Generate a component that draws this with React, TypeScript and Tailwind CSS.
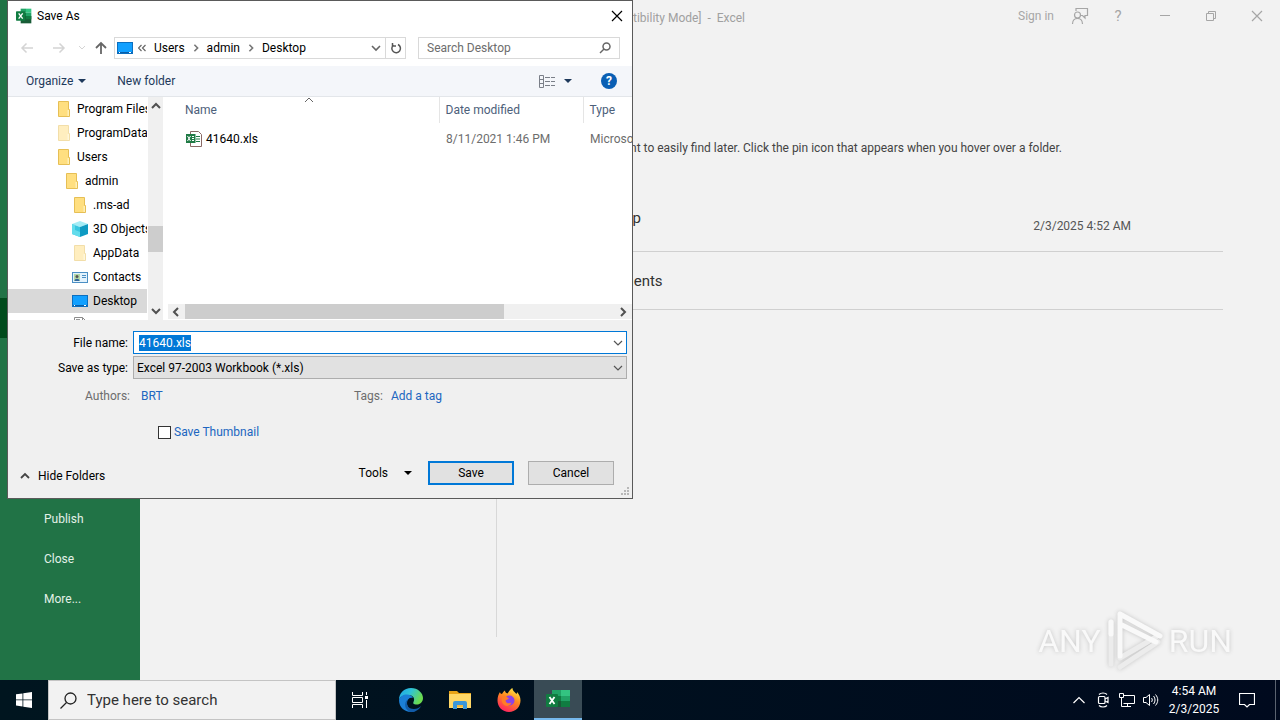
import { useEffect, useRef } from "react";
import type { ReactNode } from "react";

type Dir = "up" | "down" | "left" | "right";

const chevronPaths: Record<Dir, string> = {
  up: "M1 7 L5 3 L9 7",
  down: "M1 3 L5 7 L9 3",
  left: "M7 1 L3 5 L7 9",
  right: "M3 1 L7 5 L3 9",
};

function Chevron({ dir, className = "size-2.5", weight = 1.6 }: { dir: Dir; className?: string; weight?: number }) {
  return (
    <svg viewBox="0 0 10 10" className={`shrink-0 ${className}`} fill="none" stroke="currentColor" strokeWidth={weight}>
      <path d={chevronPaths[dir]} />
    </svg>
  );
}

function Caret() {
  return (
    <svg viewBox="0 0 8 4" className="h-1 w-2 shrink-0" fill="currentColor">
      <path d="M0 0H8L4 4Z" />
    </svg>
  );
}

function ExcelIcon({ className }: { className: string }) {
  return (
    <svg viewBox="0 0 24 24" className={className}>
      <path d="M7 1h8v6H7z" fill="#21a366" />
      <path d="M15 1h8v6h-8z" fill="#33c481" />
      <path d="M7 7h8v5H7z" fill="#107c41" />
      <path d="M15 7h8v5h-8z" fill="#21a366" />
      <path d="M7 12h16v11H7z" fill="#185c37" />
      <path d="M15 12h8v5h-8z" fill="#107c41" />
      <rect x="0" y="5" width="14" height="14" rx="1" fill="#107c41" />
      <path d="M4 8l6 8M10 8l-6 8" stroke="#fff" strokeWidth="2" />
    </svg>
  );
}

function FolderIcon({ faded = false }: { faded?: boolean }) {
  return (
    <svg viewBox="0 0 16 16" className={faded ? "size-4 shrink-0 opacity-50" : "size-4 shrink-0"}>
      <path d="M2.500 0.500h10v8h1v7h-11z" fill="#ffdf80" stroke="#e6bf55" />
      <path d="M11.500 15V9h1.500v6z" fill="#fff0b8" />
    </svg>
  );
}

function DesktopIcon() {
  return (
    <svg viewBox="0 0 16 16" className="size-4 shrink-0">
      <rect x="0.500" y="2.500" width="15" height="11" fill="#12a0ff" stroke="#0b6fc0" />
      <path d="M1 12.500h14" stroke="#0a5ea8" />
      <path d="M2 12.500h1M12 12.500h2" stroke="#fff" />
    </svg>
  );
}

function CubeIcon() {
  return (
    <svg viewBox="0 0 16 16" className="size-4 shrink-0">
      <path d="M0 3l8-3 8 3-8 3z" fill="#a5ecf5" />
      <path d="M0 3l8 3v10l-8-3z" fill="#38c6e0" />
      <path d="M16 3L8 6v10l8-3z" fill="#0e9ac2" />
      <path d="M0 3l3 1v5l5 2v5l-8-3z" fill="#63dcec" />
    </svg>
  );
}

function ContactIcon() {
  return (
    <svg viewBox="0 0 16 16" className="size-4 shrink-0">
      <rect x="0.500" y="3.500" width="15" height="10" fill="#e3f2fc" stroke="#4b8fc4" />
      <rect x="2" y="5" width="6" height="7" fill="#b3d8a8" />
      <circle cx="5" cy="7.500" r="1.500" fill="#555" />
      <path d="M2.500 12c0-3 5-3 5 0z" fill="#31659c" />
      <path d="M10 6.500h4M10 8.500h4" stroke="#4b8fc4" />
    </svg>
  );
}

function PageIcon() {
  return (
    <svg viewBox="0 0 16 16" className="size-4 shrink-0">
      <path d="M2.500 0.500h8l3 3v12h-11zM10.500 0.500v3h3" fill="#fff" stroke="#8c8c8c" />
      <path d="M4 2.500h4" stroke="#999" />
    </svg>
  );
}

function XlsIcon() {
  return (
    <svg viewBox="0 0 16 16" className="size-4 shrink-0">
      <path d="M4.500 0.500h8l3 3v12h-11z" fill="#fff" stroke="#8a6a66" />
      <path d="M10 5.500h4M10 8h4M10 10.500h4" stroke="#1f7a45" />
      <path d="M0 3h9.500v9H0z" fill="#1f7a45" />
      <path d="M1.500 5l3 5M4.500 5l-3 5M6 5.500h2M6 7.500h2M6 9.500h2" stroke="#fff" />
    </svg>
  );
}

const menuItems = ["Publish", "Close", "More..."];

function BackstageMenu() {
  return (
    <nav className="w-[140px] shrink-0 bg-[#217346] pt-[298px] text-[12px] text-[#e3f1e8]">
      <button aria-label="Save As" className="mb-[161px] block h-10 w-full bg-[#004b1c]" />
      {menuItems.map((item) => (
        <button key={item} className="flex h-10 w-full items-center pl-11 text-left">
          {item}
        </button>
      ))}
    </nav>
  );
}

function WindowButtons() {
  return (
    <div className="flex items-center text-[#a6a6a6]">
      <button className="text-[12px]">Sign in</button>
      <button aria-label="Feedback" className="ml-3.5 flex w-6 justify-center">
        <svg viewBox="0 0 18 18" className="size-[18px]" fill="none" stroke="currentColor" strokeWidth="1.200">
          <path d="M5 4V1.500h11.500v7H14v2.500l-2.500-2.500H10" />
          <circle cx="6.500" cy="8" r="3" />
          <path d="M1.500 17c0-7.500 10-7.500 10 0" />
        </svg>
      </button>
      <button aria-label="Help" className="ml-3.5 w-6 text-[15px]">?</button>
      <button aria-label="Minimize" className="flex w-[46px] justify-center pl-6">
        <svg viewBox="0 0 12 12" className="size-3" stroke="currentColor"><path d="M1 5.500h10" /></svg>
      </button>
      <button aria-label="Restore" className="flex w-[46px] justify-center pl-6">
        <svg viewBox="0 0 12 12" className="size-3" fill="none" stroke="currentColor">
          <path d="M1.500 3.500h7v7h-7zM3.500 3.500v-2h7v7h-2" />
        </svg>
      </button>
      <button aria-label="Close" className="flex w-[46px] justify-center pl-6">
        <svg viewBox="0 0 12 12" className="size-3" stroke="currentColor" strokeWidth="1.200"><path d="M1 1l10 10M11 1L1 11" /></svg>
      </button>
    </div>
  );
}

function FolderEntry({ name, date }: { name: string; date?: string }) {
  return (
    <li className="flex items-center justify-between border-b border-[#d0d0d0] pr-[92px] pl-[89px] text-[#333]">
      <span className="pt-0.5 text-[15px]">{name}</span>
      {date && <span className="pt-4 text-[12px] text-[#555]">{date}</span>}
    </li>
  );
}

function Backstage() {
  return (
    <div className="flex flex-1 bg-[#f2f2f2]">
      <BackstageMenu />
      <div className="flex min-w-0 flex-1 flex-col">
        <header className="flex h-8 items-center justify-between pr-3">
          <div className="w-[605px] pt-1 text-right text-[12px] whitespace-pre text-[#a0a0a0]">
            [Compatibility Mode]  -  Excel
          </div>
          <WindowButtons />
        </header>
        <div className="mb-[43px] flex flex-1">
          <div className="w-[357px] shrink-0 border-r border-[#d8d8d8]" />
          <div className="flex-1 pr-[57px]">
            <p className="w-[565px] pt-[106px] text-right text-[12px] leading-5 whitespace-nowrap text-[#444]">
              nt to easily find later. Click the pin icon that appears when you hover over a folder.
            </p>
            <ul className="pt-[26px] *:h-[58px] *:first:h-[68px]">
              <FolderEntry name="Desktop" date="2/3/2025 4:52 AM" />
              <FolderEntry name="Documents" />
            </ul>
          </div>
        </div>
      </div>
    </div>
  );
}

function AddressBar() {
  return (
    <div className="flex h-[34px] items-center pr-3 pl-3 text-[12px]">
      <div className="flex w-[94px] items-center justify-between pr-[7px] text-[#d4d4d4]">
        <button aria-label="Back">
          <svg viewBox="0 0 14 12" className="h-3 w-3.5" fill="none" stroke="currentColor" strokeWidth="1.500"><path d="M13 6H2M6.500 1.500L2 6l4.500 4.500" /></svg>
        </button>
        <button aria-label="Forward" className="ml-2">
          <svg viewBox="0 0 14 12" className="h-3 w-3.5" fill="none" stroke="currentColor" strokeWidth="1.500"><path d="M1 6h11M7.500 1.500L12 6l-4.500 4.500" /></svg>
        </button>
        <button aria-label="Recent locations" className="ml-1">
          <svg viewBox="0 0 6 4" className="h-1 w-1.5" fill="none" stroke="currentColor"><path d="M0 0l3 3 3-3" /></svg>
        </button>
        <button aria-label="Up" className="text-[#666]">
          <svg viewBox="0 0 12 14" className="h-3.5 w-3" fill="none" stroke="currentColor" strokeWidth="1.800"><path d="M6 13V2M1 7l5-5 5 5" /></svg>
        </button>
      </div>
      <div className="flex h-[22px] flex-1 items-center border border-[#d9d9d9] pl-0.5 text-black">
        <DesktopIcon />
        <svg viewBox="0 0 8 8" className="mr-2 ml-[5px] size-2 shrink-0" fill="none" stroke="#666" strokeWidth="1.200">
          <path d="M3.500 1l-3 3 3 3M7.500 1l-3 3 3 3" />
        </svg>
        <button>Users</button>
        <Chevron dir="right" weight={2} className="mx-[7px] size-2 text-[#777]" />
        <button>admin</button>
        <Chevron dir="right" weight={2} className="mx-[7px] size-2 text-[#777]" />
        <button>Desktop</button>
        <button aria-label="Previous locations" className="mr-1 ml-auto text-[#666]">
          <Chevron dir="down" />
        </button>
        <button aria-label="Refresh" className="flex h-full w-5 items-center justify-center border-l border-[#d9d9d9] text-[#555]">
          <svg viewBox="0 0 12 12" className="size-3" fill="none" stroke="currentColor" strokeWidth="1.500">
            <path d="M8 2.500A4.300 4.300 0 1 1 3.500 3M2.500 1v3h3.500" />
          </svg>
        </button>
      </div>
      <label className="ml-3 flex h-[22px] w-[202px] items-center border border-[#d9d9d9] pr-2 pl-2">
        <input
          aria-label="Search Desktop"
          placeholder="Search Desktop"
          className="min-w-0 flex-1 outline-none placeholder:text-[#6d6d6d]"
        />
        <svg viewBox="0 0 12 12" className="size-3 text-[#666]" fill="none" stroke="currentColor" strokeWidth="1.500">
          <circle cx="7.500" cy="4.500" r="3.500" />
          <path d="M5 7L1 11" />
        </svg>
      </label>
    </div>
  );
}

function CommandBar() {
  return (
    <div className="flex h-[31px] items-center border-b border-[#e3e6ea] bg-[#f4f6fa] pr-[15px] pl-[18px] text-[12px] text-[#1e395b]">
      <button className="flex items-center gap-[5px]">
        Organize <Caret />
      </button>
      <button className="ml-[31px]">New folder</button>
      <button aria-label="Change your view" className="ml-auto flex items-center gap-2">
        <svg viewBox="0 0 17 13" className="h-[13px] w-[17px]" fill="none" stroke="#7a7f88">
          <path d="M0.500 0.500h4v12h-4zM0.500 4.500h4M0.500 8.500h4M6 2.500h5M12 2.500h4M6 6.500h5M12 6.500h4M6 10.500h5M12 10.500h4" />
        </svg>
        <Caret />
      </button>
      <button aria-label="Help" className="ml-[29px] size-4 rounded-full bg-[#0a5fb4] text-[12px] leading-4 font-bold text-white">
        ?
      </button>
    </div>
  );
}

type TreeItem = { name: string; icon: ReactNode; indent: string };

const tree: TreeItem[] = [
  { name: "Program Files", icon: <FolderIcon />, indent: "pl-12" },
  { name: "ProgramData", icon: <FolderIcon faded />, indent: "pl-12" },
  { name: "Users", icon: <FolderIcon />, indent: "pl-12" },
  { name: "admin", icon: <FolderIcon />, indent: "pl-14" },
  { name: ".ms-ad", icon: <FolderIcon />, indent: "pl-16" },
  { name: "3D Objects", icon: <CubeIcon />, indent: "pl-16" },
  { name: "AppData", icon: <FolderIcon faded />, indent: "pl-16" },
  { name: "Contacts", icon: <ContactIcon />, indent: "pl-16" },
  { name: "Desktop", icon: <DesktopIcon />, indent: "pl-16" },
  { name: "", icon: <PageIcon />, indent: "pl-16" },
];

function FolderTree() {
  return (
    <div className="flex h-[223px] shrink-0">
      <ul className="w-[139px] overflow-hidden text-[12px] text-black">
        {tree.map((item, i) => (
          <li
            key={i}
            className={`flex h-6 items-center gap-[5px] whitespace-nowrap ${item.indent} ${item.name === "Desktop" ? "bg-[#d9d9d9]" : ""}`}
          >
            {item.icon}
            {item.name}
          </li>
        ))}
      </ul>
      <div className="ml-px flex w-[15px] flex-col items-center bg-[#f0f0f0] py-1 text-[#505050]">
        <Chevron dir="up" weight={2} />
        <div className="mt-[115px] h-[26px] w-full bg-[#cdcdcd]" />
        <Chevron dir="down" weight={2} className="mt-auto size-2.5" />
      </div>
    </div>
  );
}

function FileList() {
  return (
    <div className="ml-[5px] flex min-w-0 flex-1 flex-col overflow-hidden">
      <table className="w-full table-fixed text-left text-[12px] whitespace-nowrap text-[#6d6d6d]">
        <thead>
          <tr className="h-[26px] text-[#4c607a] *:font-normal">
            <th className="relative w-[271px] border-r border-[#e5e5e5] pl-[17px]">
              Name
              <Chevron dir="up" weight={1} className="absolute -top-0.5 left-[136px] size-2.5 text-[#666]" />
            </th>
            <th className="w-36 border-r border-[#e5e5e5] pl-1.5">Date modified</th>
            <th className="pl-1.5">Type</th>
          </tr>
        </thead>
        <tbody>
          <tr className="h-8">
            <td className="pl-[18px]">
              <span className="flex items-center gap-1 text-black">
                <XlsIcon />
                41640.xls
              </span>
            </td>
            <td className="pl-[7px]">8/11/2021 1:46 PM</td>
            <td className="overflow-hidden pl-[7px]">Microsoft</td>
          </tr>
        </tbody>
      </table>
      <div className="mt-auto mb-px flex h-[15px] items-center bg-[#f0f0f0] pr-1 pl-[3px] text-[#505050]">
        <Chevron dir="left" weight={2} />
        <div className="ml-1 h-full w-[319px] bg-[#cdcdcd]" />
        <Chevron dir="right" weight={2} className="ml-auto size-2.5" />
      </div>
    </div>
  );
}

function SaveForm() {
  const nameRef = useRef<HTMLInputElement>(null);

  useEffect(() => {
    nameRef.current?.focus();
    nameRef.current?.select();
  }, []);

  return (
    <form className="bg-[#f0f0f0] pt-[11px] text-[12px] text-black" onSubmit={(e) => e.preventDefault()}>
      <div className="flex items-center pr-[5px]">
        <label htmlFor="file-name" className="w-[120px] text-right">File name:</label>
        <div className="ml-[5px] flex h-[23px] flex-1 items-center border border-[#0078d7] bg-white pr-[3px] pl-[5px]">
          <input
            id="file-name"
            ref={nameRef}
            defaultValue="41640.xls"
            className="h-4 min-w-0 flex-1 leading-4 outline-none selection:bg-[#0078d7] selection:text-white"
          />
          <button type="button" aria-label="Show names" className="text-[#555]">
            <Chevron dir="down" weight={1.2} />
          </button>
        </div>
      </div>
      <div className="mt-0.5 flex items-center pr-[5px]">
        <label htmlFor="file-type" className="w-[120px] text-right">Save as type:</label>
        <div className="ml-[5px] grid flex-1 items-center">
          <select
            id="file-type"
            className="col-start-1 row-start-1 h-[23px] appearance-none border border-[#adadad] bg-[#e1e1e1] pl-[3px]"
          >
            <option>Excel 97-2003 Workbook (*.xls)</option>
          </select>
          <Chevron dir="down" weight={1.2} className="pointer-events-none col-start-1 row-start-1 mr-1 size-2.5 justify-self-end text-[#555]" />
        </div>
      </div>
      <div className="mt-2 flex h-[18px] items-center text-[#6d6d6d]">
        <span className="w-[122px] text-right">Authors:</span>
        <a href="#authors" className="ml-[11px] w-[213px] text-[#2066c0]">BRT</a>
        <span>Tags:</span>
        <a href="#tags" className="ml-2 text-[#2066c0]">Add a tag</a>
      </div>
      <label className="mt-[18px] ml-[150px] flex h-[18px] w-fit items-center gap-[3px] text-[#2066c0]">
        <input type="checkbox" className="size-[13px] appearance-none border border-[#333] bg-white" />
        Save Thumbnail
      </label>
      <div className="mt-5 flex h-6 items-center pr-[18px] pl-3">
        <button type="button" className="flex items-center gap-2 pt-1.5">
          <Chevron dir="up" weight={1.8} className="size-2.5 text-[#444]" />
          Hide Folders
        </button>
        <button type="button" className="mr-4 ml-auto flex items-center gap-4">
          Tools <Caret />
        </button>
        <button type="submit" className="h-6 w-[86px] border-2 border-[#0078d7] bg-[#e1e1e1]">Save</button>
        <button type="button" className="ml-3.5 h-6 w-[86px] border border-[#adadad] bg-[#e1e1e1]">Cancel</button>
      </div>
      <div className="flex h-[13px] items-end justify-end p-0.5">
        <svg viewBox="0 0 9 9" className="size-[9px]" fill="#b8b8b8">
          <path d="M6 0h2v2H6zM6 3h2v2H6zM6 6h2v2H6zM3 3h2v2H3zM3 6h2v2H3zM0 6h2v2H0z" />
        </svg>
      </div>
    </form>
  );
}

function SaveAsDialog() {
  return (
    <section
      role="dialog"
      aria-label="Save As"
      className="absolute top-0 left-[7px] w-[626px] border border-[#5a5a5a] bg-white"
    >
      <div className="flex h-[30px] items-center pr-[9px] pl-2 text-[12px] text-black">
        <ExcelIcon className="size-4" />
        <span className="ml-[5px]">Save As</span>
        <button aria-label="Close" className="ml-auto">
          <svg viewBox="0 0 12 12" className="size-3" stroke="currentColor" strokeWidth="1.200"><path d="M1 1l10 10M11 1L1 11" /></svg>
        </button>
      </div>
      <AddressBar />
      <div className="h-px" />
      <CommandBar />
      <div className="flex">
        <FolderTree />
        <FileList />
      </div>
      <SaveForm />
    </section>
  );
}

function TaskbarApps() {
  return (
    <div className="flex">
      <button aria-label="Task View" className="mr-[3px] flex w-12 items-center justify-center text-white">
        <svg viewBox="0 0 16 16" className="size-4" fill="none" stroke="currentColor">
          <path d="M0.500 0v3.500h10V0M0.500 16v-3.500h10V16M0.500 5.500h10v5h-10zM14.500 0v3M14.500 8v8" />
          <path d="M13 4h3v3h-3z" fill="currentColor" stroke="none" />
        </svg>
      </button>
      <button aria-label="Microsoft Edge" className="flex w-12 items-center justify-center">
        <svg viewBox="0 0 24 24" className="size-6">
          <defs>
            <linearGradient id="edge-top" x1="0" y1="0" x2="1" y2="0.4">
              <stop offset="0" stopColor="#1fa5e8" />
              <stop offset="0.5" stopColor="#2fc3d6" />
              <stop offset="1" stopColor="#6bdb4f" />
            </linearGradient>
          </defs>
          <path d="M0 12C0 5 5 0 12 0s12 5 12 10c0 4-3 6.500-6 6.500-4 0-4-1.500-3.500-2.500 2-4-1-7-5-7C4 7 1 9 0 12z" fill="url(#edge-top)" />
          <path d="M0 12c1-3.500 4-5.500 8-5.500 3 0 5 1.500 6 3.500-3-1-6 1-6 5 0 5 4 8 8.500 8-8 3-16.500-2-16.500-11z" fill="#1b7fd6" />
          <path d="M9 11c-3 5 0 10 6 10 3 0 5-1 7-3-2 4-6 6-10 6-6-1-8-9-3-13z" fill="#125ba8" />
        </svg>
      </button>
      <button aria-label="File Explorer" className="ml-px flex w-12 items-center justify-center">
        <svg viewBox="0 0 22 20" className="h-5 w-[22px]">
          <path d="M0 1h8l2 2h12v4H0z" fill="#e8a317" />
          <path d="M0 4h22v14H0z" fill="#ffd766" />
          <path d="M4 19v-6a2 2 0 0 1 2-2h10a2 2 0 0 1 2 2v6h-4v-4H8v4z" fill="#3b97d9" />
          <path d="M8 15h6v2H8z" fill="#f4b93d" />
        </svg>
      </button>
      <button aria-label="Firefox" className="ml-px flex w-12 items-center justify-center">
        <svg viewBox="0 0 24 24" className="size-6">
          <defs>
            <linearGradient id="fox" x1="0.8" y1="0" x2="0.3" y2="1">
              <stop offset="0" stopColor="#fff04a" />
              <stop offset="0.45" stopColor="#ff8a1f" />
              <stop offset="1" stopColor="#ff1f62" />
            </linearGradient>
          </defs>
          <path d="M3 4c0 1 1 2 2 2 1-2 2-3 3-3.500 0 1.500 1 2.500 2.500 3C12 3 13.500 1 15.500 0c0 3 2 3.500 4 6 .5-.5.500-1.500.5-2 2 2 3.500 5 3.500 8.500C23.500 19 18.500 24 12 24S.5 19 .5 12.500C.5 9 1.500 6 3 4z" fill="url(#fox)" />
          <circle cx="12.500" cy="12.500" r="5" fill="#8c42e8" />
          <path d="M5 9c3-1 5 0 7 1.500-1 1-2.500 1-3.500 2 .500 3 4 3.500 6 2-1 3-4 4-6.500 3C5 16 4 12 5 9z" fill="#ff7d26" />
        </svg>
      </button>
      <button aria-label="Excel" className="ml-px flex w-12 items-center justify-center border-b-2 border-[#76b9ed] bg-[#394b55]">
        <svg viewBox="0 0 24 20" className="h-5 w-6">
          <path d="M6 1h9v6H6z" fill="#21a366" />
          <path d="M15 1h9v6h-9z" fill="#33c481" />
          <path d="M6 7h9v5H6z" fill="#107c41" />
          <path d="M15 7h9v5h-9z" fill="#21a366" />
          <path d="M6 12h18v6H6z" fill="#185c37" />
          <path d="M15 12h9v6h-9z" fill="#107c41" />
          <rect x="0" y="5" width="12" height="13" rx="1" fill="#107c41" />
          <path d="M3.500 8l5 7M8.500 8l-5 7" stroke="#fff" strokeWidth="1.800" />
        </svg>
      </button>
    </div>
  );
}

function Tray() {
  return (
    <div className="ml-auto flex items-center text-white">
      <button aria-label="Show hidden icons" className="w-6 pl-1.5">
        <svg viewBox="0 0 12 8" className="h-2 w-3" fill="none" stroke="currentColor" strokeWidth="1.200"><path d="M0.500 7L6 1.500 11.500 7" /></svg>
      </button>
      <svg viewBox="0 0 16 16" className="mx-1 size-4" fill="none" stroke="currentColor" strokeWidth="1.200">
        <rect x="3.500" y="4.500" width="6.500" height="7" rx="1" />
        <path d="M10 7l3-1.500v5L10 9M4 2.500C6 .5 10 .5 12 2.500M4 13.500c2 2 6 2 8 0" />
      </svg>
      <svg viewBox="0 0 16 16" className="mx-1 size-4" fill="none" stroke="currentColor">
        <path d="M4 3.500h11.500v8H4.500M5 14.500h7M8.500 11.500v3M2.500 7v7.500h3" />
        <path d="M0.500 1.500h4v4h-4zM2.500 5.500V8" />
      </svg>
      <svg viewBox="0 0 16 16" className="mx-1 size-4" fill="none" stroke="currentColor">
        <path d="M0.500 5.500h2.500l3.500-3v11l-3.500-3H.5zM8.500 6c1 1.200 1 2.800 0 4M10.500 4c2 2.500 2 5.500 0 8M12.500 2.500c3 3.500 3 7.500 0 11" />
      </svg>
      <div className="mr-1 w-[62px] text-center text-[12px] leading-[18px]">
        <div>4:54 AM</div>
        <div>2/3/2025</div>
      </div>
      <button aria-label="Notifications" className="flex w-9 justify-center">
        <svg viewBox="0 0 16 16" className="size-4" fill="none" stroke="currentColor" strokeWidth="1.200">
          <path d="M0.500 1.500h15v11h-5L8 15l-2.500-2.500h-5z" />
        </svg>
      </button>
      <div className="mr-1 ml-2.5 h-10 w-px bg-[#5a6370]" />
    </div>
  );
}

function Taskbar() {
  return (
    <footer className="flex h-10 bg-linear-to-r from-[#00151f] to-[#000a1e]">
      <button aria-label="Start" className="flex w-12 items-center justify-center">
        <svg viewBox="0 0 16 16" className="size-4" fill="#fff">
          <path d="M0 2.300L6.500 1.400v6.100H0zM7.300 1.300L16 0v7.500H7.300zM0 8.300h6.500v6.200L0 13.600zM7.300 8.300H16V16l-8.700-1.300z" />
        </svg>
      </button>
      <label className="flex w-72 items-center gap-2.5 border border-[#c4c4c4] bg-[#f2f2f2] pl-[11px]">
        <svg viewBox="0 0 17 17" className="size-[17px] shrink-0" fill="none" stroke="#222" strokeWidth="1.300">
          <circle cx="10.500" cy="6.500" r="5.500" />
          <path d="M6.500 10.500L0.500 16.500" />
        </svg>
        <input
          aria-label="Type here to search"
          placeholder="Type here to search"
          className="min-w-0 flex-1 text-[15px] outline-none placeholder:text-[#333]"
        />
      </label>
      <TaskbarApps />
      <Tray />
    </footer>
  );
}

function Watermark() {
  return (
    <div className="absolute right-12 bottom-12 flex items-center gap-1.5 font-['Roboto',sans-serif] text-[32px] leading-none text-[#f9f9f9] drop-shadow-[0_0_2px_#c4c4c4]">
      <span>ANY</span>
      <svg viewBox="0 0 56 62" className="h-[62px] w-14" fill="none" stroke="currentColor" strokeWidth="5" strokeLinejoin="round" strokeLinecap="round">
        <path d="M51 32L13 57M49 27L13 48M4 12v42" stroke="#ececec" />
        <path d="M13 4l40 22M13 4v42M13 14l36 18M4 12v12" />
      </svg>
      <span>RUN</span>
    </div>
  );
}

export default function App() {
  return (
    <div className="relative flex min-h-screen flex-col overflow-hidden font-['Roboto','Noto_Sans',sans-serif]">
      <Backstage />
      <Watermark />
      <SaveAsDialog />
      <Taskbar />
    </div>
  );
}
